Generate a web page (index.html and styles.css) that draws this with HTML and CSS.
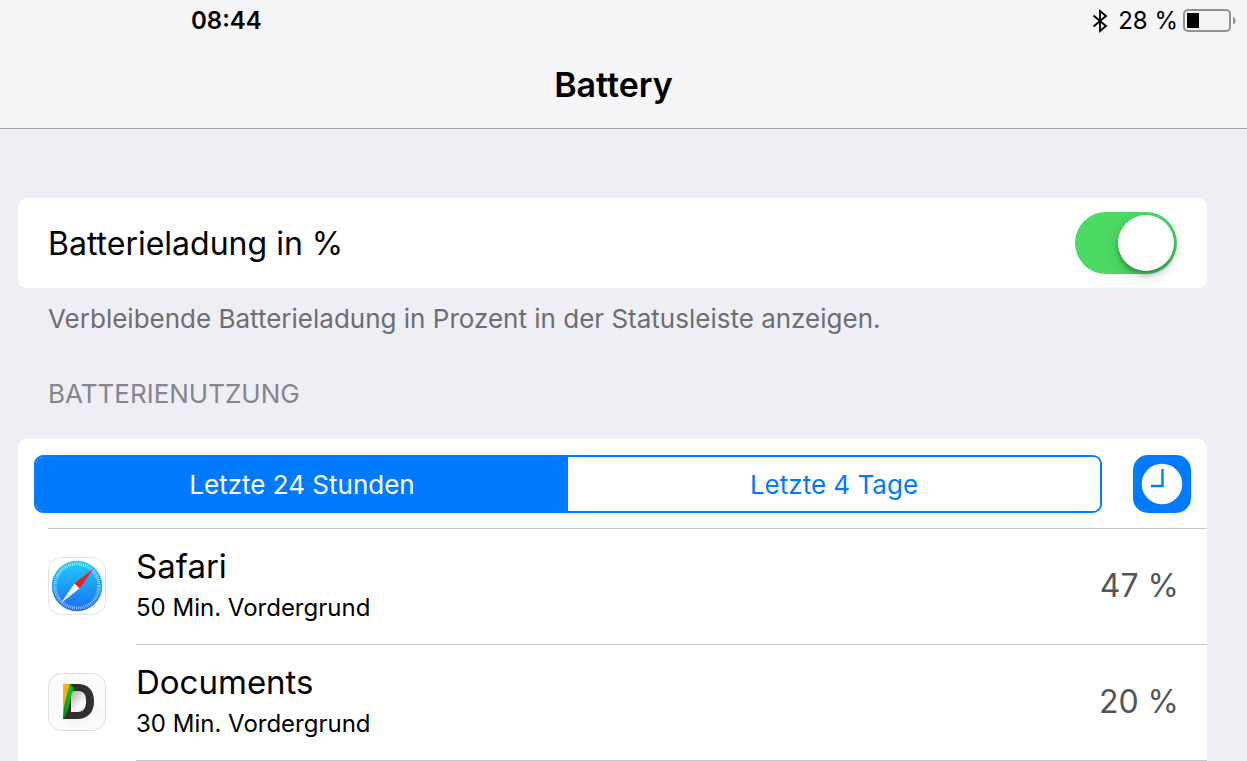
FILE: index.html
```html
<!DOCTYPE html>
<html lang="de">
<head>
<meta charset="utf-8">
<meta name="viewport" content="width=device-width, initial-scale=1">
<title>Battery</title>
<link rel="stylesheet" href="styles.css">
</head>
<body>
<header class="header">
  <div class="status">
    <time class="clock">08:44</time>
    <div class="status-right">
      <svg class="bluetooth" width="16" height="24" viewBox="0 0 16 24" aria-label="Bluetooth"><path d="M1.500 6.500 14 17 8 22V2l6 5L1.500 17.500" fill="none" stroke="#000" stroke-width="1.800"/></svg>
      <span class="charge">28 %</span>
      <svg width="54" height="24" viewBox="0 0 54 24" aria-hidden="true"><rect x="1" y="1" width="46" height="21" rx="4" fill="none" stroke="#929294" stroke-width="2"/><rect x="4" y="4" width="12" height="15" fill="#000"/><path d="M50 8c3.500 1 3.500 6.500 0 7.500z" fill="#929294"/></svg>
    </div>
  </div>
  <h1 class="title">Battery</h1>
</header>
<main class="content">
  <section class="card setting">
    <label for="percent">Batterieladung in %</label>
    <input class="switch" type="checkbox" role="switch" id="percent" checked>
  </section>
  <p class="note">Verbleibende Batterieladung in Prozent in der Statusleiste anzeigen.</p>
  <h2 class="section-title">BATTERIENUTZUNG</h2>
  <section class="card list">
    <div class="toolbar">
      <div class="segments">
        <button class="segment selected" type="button" aria-pressed="true">Letzte 24 Stunden</button>
        <button class="segment" type="button" aria-pressed="false">Letzte 4 Tage</button>
      </div>
      <button class="time-button" type="button" aria-label="Nutzungsdauer anzeigen">
        <svg width="58" height="58" viewBox="0 0 58 58"><circle cx="29" cy="29" r="20.300" fill="#fff"/><path d="M29.500 14v17H18" fill="none" stroke="#007aff" stroke-width="2.400"/></svg>
      </button>
    </div>
    <ul class="apps">
      <li class="app">
        <svg class="app-icon" width="58" height="58" viewBox="0 0 58 58" aria-hidden="true">
          <defs><linearGradient id="sky" x2="0" y2="1"><stop stop-color="#1fcdfb"/><stop offset="1" stop-color="#1b6cf3"/></linearGradient></defs>
          <rect x=".5" y=".5" width="57" height="57" rx="13" fill="#fff" stroke="#e2e2e4"/>
          <circle cx="29" cy="29" r="25.200" fill="url(#sky)"/>
          <circle cx="29" cy="29" r="22" fill="none" stroke="#fff" stroke-opacity=".7" stroke-width="3.200" stroke-dasharray=".75 1.170"/>
          <path d="M45.500 11.500 26.500 26.500l5 5z" fill="#f11c1c"/><path d="m13 46 18.500-14.500-5-5z" fill="#fff"/>
        </svg>
        <div class="details"><h3>Safari</h3><p>50 Min. Vordergrund</p></div>
        <span class="usage">47 %</span>
      </li>
      <li class="app">
        <svg class="app-icon" width="58" height="58" viewBox="0 0 58 58" aria-hidden="true">
          <defs>
            <linearGradient id="shade" x2="1" y2="1"><stop offset=".2" stop-color="#ddd"/><stop offset=".8" stop-color="#fafafa"/></linearGradient>
            <linearGradient id="inside" x2=".8" y2="1"><stop stop-color="#aaa"/><stop offset=".7" stop-color="#fcfcfc"/></linearGradient>
            <linearGradient id="leaf" x2="1"><stop stop-color="#078b18"/><stop offset=".6" stop-color="#08ce1b"/><stop offset="1" stop-color="#047b0d"/></linearGradient>
          </defs>
          <rect x=".5" y=".5" width="57" height="57" rx="13" fill="#fbfbfb" stroke="#dedee0"/>
          <path d="M15 46l9 8h26l6-8V39L44 27z" fill="url(#shade)" opacity=".4"/>
          <path d="M15 11h14.500C41 11 46 18 46 28.500S40 46 29 46H15z" fill="#303030"/>
          <path d="M23 18h7c6 0 8 4 8 10.500S35.500 39 29 39h-6z" fill="url(#inside)"/>
          <path d="M15 11h7l-5 23-2 12z" fill="#ffad13"/>
          <path d="M22 11l5 5c-5 2-4 18-11.500 30-1-13 4-25 6.500-35z" fill="url(#leaf)"/>
        </svg>
        <div class="details"><h3>Documents</h3><p>30 Min. Vordergrund</p></div>
        <span class="usage">20 %</span>
      </li>
    </ul>
  </section>
</main>
</body>
</html>
```
FILE: styles.css
```css
* { box-sizing: border-box; }
body {
  margin: 0;
  background: #efeef4;
  color: #000;
  font-family: Inter, "Liberation Sans", sans-serif;
}
h1, h2, h3, p, ul { margin: 0; padding: 0; font-weight: 400; }
button { font: inherit; padding: 0; border: 0; cursor: pointer; }
svg { display: block; flex: none; }
.header {
  background: #f5f5f7;
  border-bottom: 1px solid #a7a7ab;
}
.status {
  display: flex;
  justify-content: space-between;
  align-items: center;
  height: 42px;
  padding: 0 10px 0 191px;
  font-size: 24px;
  line-height: 32px;
}
.clock { font-weight: 600; }
.status-right { display: flex; align-items: center; }
.charge { margin: 0 5px 0 10px; }
.title {
  padding: 0 40px 0 20px;
  font-size: 34px;
  font-weight: 600;
  line-height: 86px;
  text-align: center;
}
.content { padding: 69px 40px 0 18px; }
.card { background: #fff; border-radius: 9px; }
.list { border-bottom-left-radius: 0; border-bottom-right-radius: 0; }
.setting {
  display: flex;
  align-items: center;
  justify-content: space-between;
  height: 90px;
  padding: 0 30px;
  font-size: 32px;
}
.switch {
  appearance: none;
  display: flex;
  align-items: center;
  width: 102px;
  height: 62px;
  margin: 0;
  padding: 0 3px;
  border-radius: 31px;
  background: #d8d8dc;
}
.switch::before {
  content: "";
  width: 56px;
  height: 56px;
  border-radius: 50%;
  background: #fff;
  box-shadow: 0 4px 5px rgba(0, 0, 0, .25), 0 5px 16px rgba(0, 0, 0, .14);
}
.switch:checked { background: #4cd964; justify-content: flex-end; }
.note {
  padding: 15px 30px 0;
  color: #6d6d72;
  font-size: 26px;
  line-height: 32px;
}
.section-title {
  padding: 43px 30px 29px;
  color: #85858b;
  font-size: 26px;
  line-height: 32px;
}
.toolbar {
  display: flex;
  gap: 31px;
  padding: 16px 16px 15px;
}
.segments {
  display: flex;
  flex: 1;
  height: 58px;
  border: 2px solid #007aff;
  border-radius: 9px;
  overflow: hidden;
}
.segment {
  flex: 1;
  background: #fff;
  color: #007aff;
  font-size: 26px;
}
.segment.selected { background: #007aff; color: #fff; }
.time-button {
  width: 58px;
  height: 58px;
  border-radius: 15px;
  background: #007aff;
}
.apps { list-style: none; }
.app {
  position: relative;
  display: flex;
  align-items: center;
  height: 116px;
  padding: 0 28px 0 30px;
}
.app:last-child { height: 117px; padding-bottom: 1px; }
.app::before,
.app:last-child::after {
  content: "";
  position: absolute;
  top: 0;
  left: 118px;
  right: 0;
  border-top: 1px solid #c8c7cc;
}
.app:first-child::before { left: 30px; }
.app:last-child::after { top: auto; bottom: 0; }
.details { flex: 1; padding-left: 30px; }
.details h3 { font-size: 33px; line-height: 44px; }
.details p { font-size: 24px; line-height: 40px; }
.usage { color: #555; font-size: 32px; line-height: 40px; }
```
